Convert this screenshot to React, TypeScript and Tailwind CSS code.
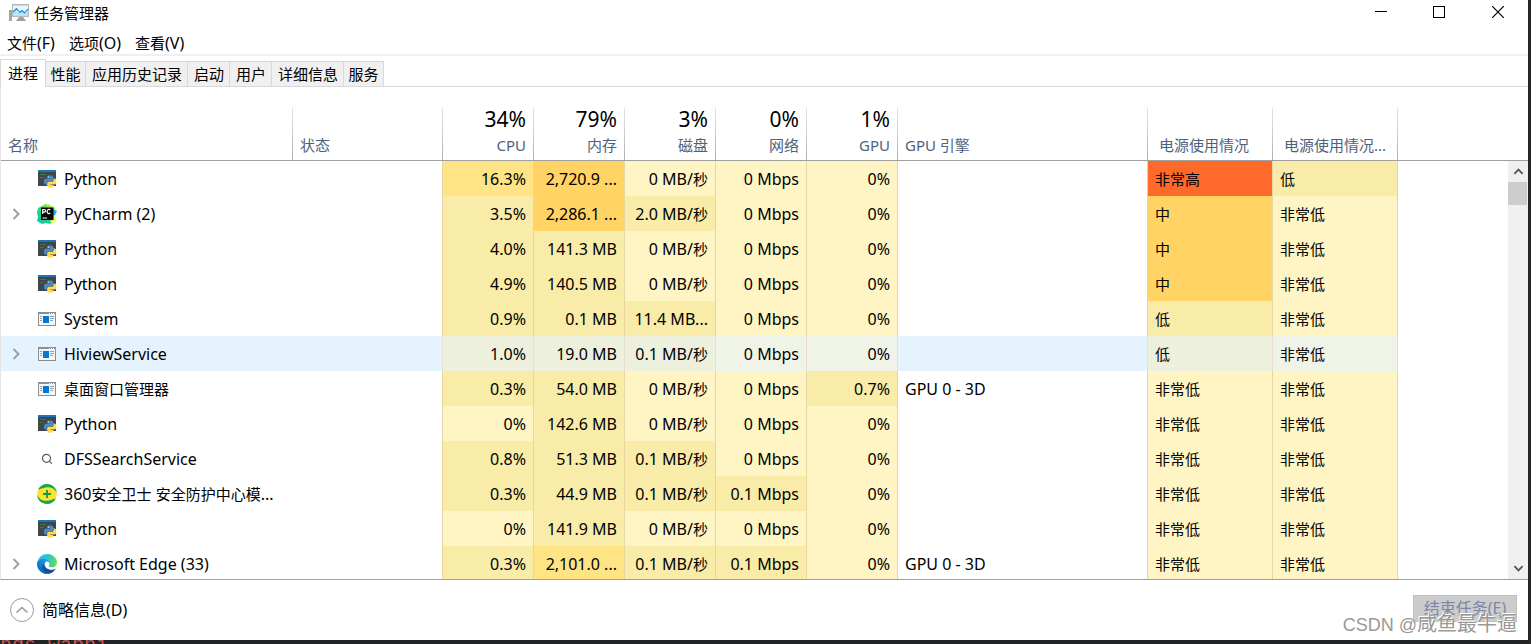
import { Fragment, useId, useState } from 'react';
import type { ReactNode } from 'react';

type IconName = 'python' | 'pycharm' | 'window' | 'search' | 'shield' | 'edge';

interface Process {
  icon: IconName;
  name: string;
  group?: boolean;
  metrics: string[];
  heat: number[];
  engine?: string;
  power: [string, string];
}

const METRICS = [
  { total: '34%', label: 'CPU' },
  { total: '79%', label: '内存' },
  { total: '3%', label: '磁盘' },
  { total: '0%', label: '网络' },
  { total: '1%', label: 'GPU' },
];

const PROCESSES: Process[] = [
  { icon: 'python', name: 'Python', metrics: ['16.3%', '2,720.9 ...', '0 MB/秒', '0 Mbps', '0%'], heat: [2, 3, 0, 0, 0, 4, 1], power: ['非常高', '低'] },
  { icon: 'pycharm', name: 'PyCharm (2)', group: true, metrics: ['3.5%', '2,286.1 ...', '2.0 MB/秒', '0 Mbps', '0%'], heat: [1, 3, 1, 0, 0, 3, 0], power: ['中', '非常低'] },
  { icon: 'python', name: 'Python', metrics: ['4.0%', '141.3 MB', '0 MB/秒', '0 Mbps', '0%'], heat: [1, 1, 0, 0, 0, 3, 0], power: ['中', '非常低'] },
  { icon: 'python', name: 'Python', metrics: ['4.9%', '140.5 MB', '0 MB/秒', '0 Mbps', '0%'], heat: [1, 1, 0, 0, 0, 3, 0], power: ['中', '非常低'] },
  { icon: 'window', name: 'System', metrics: ['0.9%', '0.1 MB', '11.4 MB...', '0 Mbps', '0%'], heat: [1, 1, 1, 0, 0, 1, 0], power: ['低', '非常低'] },
  { icon: 'window', name: 'HiviewService', group: true, metrics: ['1.0%', '19.0 MB', '0.1 MB/秒', '0 Mbps', '0%'], heat: [1, 1, 1, 0, 0, 1, 0], power: ['低', '非常低'] },
  { icon: 'window', name: '桌面窗口管理器', metrics: ['0.3%', '54.0 MB', '0 MB/秒', '0 Mbps', '0.7%'], heat: [1, 1, 0, 0, 1, 0, 0], engine: 'GPU 0 - 3D', power: ['非常低', '非常低'] },
  { icon: 'python', name: 'Python', metrics: ['0%', '142.6 MB', '0 MB/秒', '0 Mbps', '0%'], heat: [0, 1, 0, 0, 0, 0, 0], power: ['非常低', '非常低'] },
  { icon: 'search', name: 'DFSSearchService', metrics: ['0.8%', '51.3 MB', '0.1 MB/秒', '0 Mbps', '0%'], heat: [1, 1, 1, 0, 0, 0, 0], power: ['非常低', '非常低'] },
  { icon: 'shield', name: '360安全卫士 安全防护中心模...', metrics: ['0.3%', '44.9 MB', '0.1 MB/秒', '0.1 Mbps', '0%'], heat: [1, 1, 1, 1, 0, 0, 0], power: ['非常低', '非常低'] },
  { icon: 'python', name: 'Python', metrics: ['0%', '141.9 MB', '0 MB/秒', '0 Mbps', '0%'], heat: [0, 1, 0, 0, 0, 0, 0], power: ['非常低', '非常低'] },
  { icon: 'edge', name: 'Microsoft Edge (33)', group: true, metrics: ['0.3%', '2,101.0 ...', '0.1 MB/秒', '0.1 Mbps', '0%'], heat: [1, 2, 1, 1, 0, 0, 0], engine: 'GPU 0 - 3D', power: ['非常低', '非常低'] },
];

const HEAT = ['bg-[#fff4c4]', 'bg-[#f9eca8]', 'bg-[#ffe486]', 'bg-[#ffd364]', 'bg-[#ff692a]'];
const HEAT_SELECTED = ['bg-[#f0f3e8]', 'bg-[#edf0dc]', 'bg-[#f0ecc8]', 'bg-[#f0e4b8]', 'bg-[#f0a080]'];

const TABS = ['性能', '应用历史记录', '启动', '用户', '详细信息', '服务'];

/** Sets Chinese runs at their own size beside the Latin text around them. */
function Mixed({ children }: { children: string }) {
  return (
    <>
      {children.split(/([\u4e00-\u9fff]+)/).map((part, i) =>
        i % 2 === 1 ? (
          <span key={i} className="text-[15px]">{part}</span>
        ) : (
          <Fragment key={i}>{part}</Fragment>
        ),
      )}
    </>
  );
}

function PythonIcon() {
  return (
    <svg width="20" height="20" viewBox="0 0 20 20" aria-hidden="true">
      <path fill="#414648" d="M1 1h18v16H1z" />
      <path fill="#1b74bd" d="M1 1h18v2H1z" />
      <path stroke="#3d7a42" d="M3 5.500h6M3 8.500h4" />
      <g transform="translate(7 6.500) scale(.51)">
        <path fill="#4b8bc0" d="M14.250.18l.9.2.73.26.59.3.45.32.34.34.25.34.16.33.1.3.04.26.02.2-.01.13V8.500l-.05.63-.13.55-.21.46-.26.38-.3.31-.33.25-.35.19-.35.14-.33.1-.3.07-.26.04-.21.02H8.770l-.69.05-.59.14-.5.22-.41.27-.33.32-.27.35-.2.36-.15.37-.1.35-.07.32-.04.27-.02.21v3.060H3.170l-.21-.03-.28-.07-.32-.12-.35-.18-.36-.26-.36-.36-.35-.46-.32-.59-.28-.73-.21-.88-.14-1.050-.05-1.230.06-1.220.16-1.040.24-.87.32-.71.36-.57.4-.44.42-.33.42-.24.4-.16.36-.1.32-.05.24-.01h.16l.06.01h8.160v-.83H6.180l-.01-2.750-.02-.37.05-.34.11-.31.17-.28.25-.26.31-.23.38-.2.44-.18.51-.15.58-.12.64-.1.71-.06.77-.04.84-.02 1.270.05z" />
        <path fill="#ffdb55" d="M21.100 6.110l.28.06.32.12.35.18.36.27.36.35.35.47.32.59.28.73.21.88.14 1.040.05 1.230-.06 1.230-.16 1.040-.24.86-.32.71-.36.57-.4.45-.42.33-.42.24-.4.16-.36.09-.32.05-.24.02-.16-.01h-8.220v.82h5.840l.01 2.760.02.36-.05.34-.11.31-.17.29-.25.25-.31.24-.38.2-.44.17-.51.15-.58.13-.64.09-.71.07-.77.04-.84.01-1.270-.04-1.070-.14-.9-.2-.73-.25-.59-.3-.45-.33-.34-.34-.25-.34-.16-.33-.1-.3-.04-.25-.02-.2.01-.13v-5.340l.05-.64.13-.54.21-.46.26-.38.3-.32.33-.24.35-.2.35-.14.33-.1.3-.06.26-.04.21-.02.13-.01h5.840l.69-.05.59-.14.5-.21.41-.28.33-.32.27-.35.2-.36.15-.36.1-.35.07-.32.04-.28.02-.21V6.070h2.090l.14.01z" />
        <circle cx="8.700" cy="3" r="1.200" fill="#fff" />
      </g>
    </svg>
  );
}

function PyCharmIcon() {
  const id = useId();
  return (
    <svg width="20" height="20" viewBox="0 0 20 20" aria-hidden="true">
      <defs>
        <linearGradient id={id} x1="0" y1="1" x2="1" y2="0">
          <stop offset="0" stopColor="#12bfa5" />
          <stop offset=".45" stopColor="#21d789" />
          <stop offset=".75" stopColor="#8fea45" />
          <stop offset="1" stopColor="#fcf84a" />
        </linearGradient>
      </defs>
      <path fill={`url(#${id})`} d="M1 4l4-2 3-2 5 1 4 2 1 3-1 11-4 3-4-1-4 1-5-3 1-4-1-4z" />
      <path fill="#0fb6e8" d="M16 5l4 2-2 4h-2z" />
      <path fill="#fcf84a" d="M16 12l3 4-2 3-4-1z" />
      <path fill="#090909" d="M4 3.500h12.500V16H4z" />
      <path fill="none" stroke="#fff" strokeWidth="1.200" d="M5.700 10V5.500h1.500a1.200 1.200 0 010 2.700H5.700M13.300 5.800c-1.800-1-3.200 0-3.200 1.800s1.500 2.800 3.200 1.500" />
      <path fill="#fff" d="M5.500 13.500h4.500v1H5.500z" />
    </svg>
  );
}

function WindowIcon() {
  return (
    <svg width="20" height="20" viewBox="0 0 20 20" shapeRendering="crispEdges" aria-hidden="true">
      <path fill="#8a8f96" d="M1 3h18v14H1z" />
      <path fill="#f5f6f7" d="M2 5h16v11H2z" />
      <path fill="#fff" d="M12 4h1v1h-1zM14 4h1v1h-1zM16 4h1v1h-1z" />
      <path fill="#0078d7" d="M6 7h6v7H6z" />
      <path stroke="#9a9fa5" d="M3 7.500h2M3 9.500h2M3 11.500h2M13 7.500h4M13 9.500h4M13 11.500h3" />
    </svg>
  );
}

function SearchIcon() {
  return (
    <svg width="20" height="20" viewBox="0 0 20 20" fill="none" stroke="#5c5c5c" strokeWidth="1.200" aria-hidden="true">
      <circle cx="9.500" cy="9.300" r="4" />
      <path d="M12.300 12.200l2.500 2.500" />
    </svg>
  );
}

function ShieldIcon() {
  return (
    <svg width="20" height="20" viewBox="0 0 20 20" aria-hidden="true">
      <circle cx="10" cy="10" r="9.800" fill="#ffe22e" />
      <path fill="#12a84c" d="M1.200 5.600C3 2 6.300.1 10 .1c5.400 0 9.500 4 9.900 9C17.500 4.400 14 3.100 10.200 3.300 6.600 3.500 4 5.200 1.200 5.600z" />
      <path fill="#12a84c" d="M18.800 14.400C17 18 13.700 19.900 10 19.900c-5.400 0-9.500-4-9.900-9 2.400 4.700 5.900 6 9.700 5.800 3.600-.2 6.200-1.900 9-2.300z" />
      <path stroke="#0d9a48" strokeWidth="1.800" d="M10 6v8M6 10h8" />
    </svg>
  );
}

function EdgeIcon() {
  const id = useId();
  return (
    <svg width="20" height="20" viewBox="0 0 256 256" aria-hidden="true">
      <defs>
        <linearGradient id={`${id}a`} x1="0" y1=".5" x2="1" y2=".5">
          <stop offset="0" stopColor="#0c59a4" />
          <stop offset="1" stopColor="#114a8b" />
        </linearGradient>
        <linearGradient id={`${id}b`} x1=".8" y1=".2" x2=".3" y2="1">
          <stop offset="0" stopColor="#1b9de2" />
          <stop offset=".5" stopColor="#0f80d0" />
          <stop offset="1" stopColor="#0a5cae" />
        </linearGradient>
        <linearGradient id={`${id}c`} x1="0" y1=".4" x2="1" y2=".5">
          <stop offset="0" stopColor="#30b5f0" />
          <stop offset=".5" stopColor="#2bc3d2" />
          <stop offset="1" stopColor="#66e04d" />
        </linearGradient>
      </defs>
      <path fill={`url(#${id}a)`} d="M231 190.500c-3.400 1.800-6.900 3.400-10.500 4.700a101.700 101.700 0 01-35.900 6.500c-47.300 0-88.500-32.500-88.500-74.300a31.500 31.500 0 0116.400-27.300c-42.800 1.800-53.800 46.400-53.800 72.500 0 73.900 68.100 81.400 82.800 81.400 7.900 0 19.800-2.300 27-4.600l1.300-.4a128.300 128.300 0 0066.600-52.800 4 4 0 00-5.400-5.700z" />
      <path fill={`url(#${id}b)`} d="M105.700 241.400a79.200 79.200 0 01-22.700-21.300 80.700 80.700 0 0129.500-120c3.200-1.500 8.500-4.100 15.600-4a32.400 32.400 0 0125.700 13 31.900 31.900 0 016.300 18.700c0-.2 24.500-79.600-80-79.600-43.900 0-80 41.700-80 78.200a130.200 130.200 0 0012.100 56 128 128 0 00156.400 67.100 75.500 75.500 0 01-62.800-8z" />
      <path fill={`url(#${id}c)`} d="M152.300 148.900c-.9 1-3.400 2.500-3.400 5.600 0 2.600 1.700 5.200 4.800 7.300 14.300 10 41.400 8.600 41.500 8.600a59.600 59.600 0 0030.300-8.300A61.400 61.400 0 00256 109.300c.3-22.400-8-37.300-11.300-43.900C223.500 23.900 177.700 0 128 0A128 128 0 000 126.200c.5-36.500 36.800-66 80-66 3.500 0 23.500.3 42 10.100 16.300 8.600 24.900 18.900 30.800 29.200 6.200 10.700 7.300 24.100 7.300 29.500 0 5.300-2.700 13.300-7.800 19.900z" />
    </svg>
  );
}

const ICONS: Record<IconName, () => ReactNode> = {
  python: PythonIcon,
  pycharm: PyCharmIcon,
  window: WindowIcon,
  search: SearchIcon,
  shield: ShieldIcon,
  edge: EdgeIcon,
};

function AppIcon() {
  return (
    <svg width="20" height="18" viewBox="0 0 20 18" aria-hidden="true">
      <path fill="#a3a7aa" d="M0 6h3v11H0z" />
      <path fill="#49d13c" d="M1 6h1v2H1z" />
      <path fill="#b4b8bb" d="M3 0h17v13H3z" />
      <path fill="#e8f7fd" d="M4 1.500h15v10H4z" />
      <path fill="#b9e4f5" d="M4 8l3-3 3 4 3-3 3 3 3-4v6.500H4z" />
      <path fill="none" stroke="#1c86c8" strokeWidth="1.100" d="M4 8l3.500-3.500L11 8.500l2-2 2.500 2.500L19 5" />
      <path fill="#9b9fa2" d="M10 13h4l3 4H7z" />
    </svg>
  );
}

function Chevron({ className, d }: { className: string; d: string }) {
  return (
    <svg className={className} viewBox="0 0 12 12" fill="none" stroke="currentColor" strokeWidth="2" aria-hidden="true">
      <path d={d} />
    </svg>
  );
}

function HeaderCell({ children, className = '' }: { children?: ReactNode; className?: string }) {
  return (
    <th scope="col" className="border-b border-[#a0a0a0] p-0 pt-5 align-bottom font-normal">
      <div className={`flex h-[53px] flex-col justify-end border-r pb-1 text-[#4f627d] [border-image:linear-gradient(#e8e8e8,#b0b0b0)_1] ${className}`}>
        {children}
      </div>
    </th>
  );
}

export default function App() {
  const [selected, setSelected] = useState(5);

  return (
    <div className="flex h-screen flex-col overflow-hidden bg-[#222426] pr-[3px] text-base text-black [font-family:'Noto_Sans','Noto_Sans_CJK_SC',sans-serif]">
      <div className="flex min-h-0 flex-1 flex-col bg-white">
        <header className="flex h-[30px] shrink-0 items-start justify-between">
          <h1 className="flex h-[26px] items-center gap-[5px] pl-[9px] text-[15px]">
            <AppIcon />
            任务管理器
          </h1>
          <div className="flex">
            <button aria-label="最小化" className="flex h-6 w-[58px] items-center justify-center">
              <svg width="12" height="12" stroke="#000" shapeRendering="crispEdges"><path d="M0 5.500h12" /></svg>
            </button>
            <button aria-label="最大化" className="flex h-6 w-[58px] items-center justify-center">
              <svg width="12" height="12" stroke="#000" fill="none" shapeRendering="crispEdges"><path d="M.5.5h11v11H.5z" /></svg>
            </button>
            <button aria-label="关闭" className="flex h-6 w-[60px] items-center justify-center">
              <svg width="12" height="12" stroke="#000" strokeWidth="1.200"><path d="M0 0l12 12M12 0L0 12" /></svg>
            </button>
          </div>
        </header>

        <nav className="flex h-[26px] shrink-0 items-center gap-[14px] border-b-2 border-[#f0f0f0] pl-[7px] pt-0.5 leading-5">
          {['文件(F)', '选项(O)', '查看(V)'].map((item) => (
            <button key={item}><Mixed>{item}</Mixed></button>
          ))}
        </nav>

        <div role="tablist" className="flex h-[31px] shrink-0 items-end text-[15px]">
          <button role="tab" aria-selected="true" className="h-7 w-[46px] border border-b-0 border-[#d9d9d9] text-center leading-[25px]">
            进程
          </button>
          {TABS.map((tab, i) => (
            <button
              key={tab}
              role="tab"
              aria-selected="false"
              className={`h-[26px] border-y border-r border-[#d9d9d9] bg-[#f0f0f0] leading-6 ${i === 0 || i === TABS.length - 1 ? 'w-10' : 'pl-[6px] pr-[5px]'}`}
            >
              {tab}
            </button>
          ))}
          <div className="h-px flex-1 bg-[#d9d9d9]" />
        </div>

        <div className="flex min-h-0 flex-1 overflow-hidden border-b border-l border-b-[#a0a0a0] border-l-[#e5e5e5]">
          <div className="min-w-0 flex-1 overflow-hidden">
            <table className="w-full table-fixed border-separate border-spacing-0">
              <colgroup>
                <col className="w-[292px]" />
                <col className="w-[150px]" />
                {METRICS.map((m) => <col key={m.label} className="w-[91px]" />)}
                <col className="w-[250px]" />
                <col className="w-[125px]" />
                <col className="w-[125px]" />
                <col />
              </colgroup>
              <thead className="text-left text-[15px] leading-[22px]">
                <tr>
                  <HeaderCell className="pl-[7px]">名称</HeaderCell>
                  <HeaderCell className="pl-[7px]">状态</HeaderCell>
                  {METRICS.map((m) => (
                    <HeaderCell key={m.label} className="pr-[7px] text-right">
                      <span className="pb-px text-[21px] leading-7 text-black">{m.total}</span>
                      <span className="h-[22px]">{m.label}</span>
                    </HeaderCell>
                  ))}
                  <HeaderCell className="pl-[7px]"><span>GPU 引擎</span></HeaderCell>
                  <HeaderCell className="pl-[11px]">电源使用情况</HeaderCell>
                  <HeaderCell className="pl-[11px]">电源使用情况...</HeaderCell>
                  <td className="border-b border-[#a0a0a0]" />
                </tr>
              </thead>
              <tbody className="leading-6">
                {PROCESSES.map((p, row) => {
                  const Icon = ICONS[p.icon];
                  const active = row === selected;
                  const heat = active ? HEAT_SELECTED : HEAT;
                  const plain = active ? 'bg-[#e5f3ff]' : '';
                  const line = active ? 'border-[#eadfcb]' : 'border-[#e8d5a0]';
                  return (
                    <tr key={row} onClick={() => setSelected(row)} className="h-[35px] whitespace-nowrap">
                      <td className={`p-0 ${plain}`}>
                        <div className="flex h-[35px] items-center">
                          <div className="flex w-[36px] shrink-0 pl-[9px]">
                            {p.group && (
                              <button aria-label={`展开 ${p.name}`} className="text-[#a0a0a0]">
                                <Chevron className="size-3" d="M3.500 1l5 5-5 5" />
                              </button>
                            )}
                          </div>
                          <Icon />
                          <span className="pl-[7px]"><Mixed>{p.name}</Mixed></span>
                        </div>
                      </td>
                      <td className={`border-r p-0 ${plain} ${line}`} />
                      {p.metrics.map((value, i) => (
                        <td key={i} className={`border-r p-0 pr-[7px] text-right ${heat[p.heat[i]]} ${line}`}>
                          <Mixed>{value}</Mixed>
                        </td>
                      ))}
                      <td className={`border-r p-0 pl-[7px] ${plain} ${line}`}>{p.engine}</td>
                      {p.power.map((value, i) => (
                        <td key={i} className={`border-r p-0 pl-[7px] ${heat[p.heat[5 + i]]} ${line}`}>
                          <Mixed>{value}</Mixed>
                        </td>
                      ))}
                      <td />
                    </tr>
                  );
                })}
              </tbody>
            </table>
          </div>
          <div className="flex w-5 shrink-0 flex-col text-[#555]">
            <div className="h-[74px] shrink-0 border-b border-[#a0a0a0]" />
            <div className="flex flex-1 flex-col bg-[#f0f0f0]">
              <button aria-label="向上滚动" className="flex h-[21px] items-center justify-center">
                <Chevron className="size-[11px]" d="M1.500 8.500L6 4l4.500 4.500" />
              </button>
              <div className="mr-px h-[23px] bg-[#cdcdcd]" />
              <button aria-label="向下滚动" className="mt-auto flex h-[21px] items-center justify-center">
                <Chevron className="size-[11px]" d="M1.500 3.500L6 8l4.500-4.500" />
              </button>
            </div>
          </div>
        </div>

        <footer className="relative flex h-[60px] shrink-0 items-center justify-between pl-[10px] pr-[11px]">
          <button className="flex items-center gap-2">
            <svg width="24" height="24" fill="none" stroke="#999" aria-hidden="true">
              <circle cx="12" cy="12" r="11.500" />
              <path strokeWidth="1.600" d="M6.500 14.500L12 9.500l5.500 5" />
            </svg>
            简略信息(D)
          </button>
          <button disabled className="mb-1 h-[27px] w-[104px] border border-[#bfbfbf] bg-[#cccccc] leading-6 text-[#7f86a8]">
            结束任务(E)
          </button>
          <span className="pointer-events-none absolute bottom-0 right-[11px] whitespace-nowrap text-[18px] leading-[30px] text-[#999] [font-family:'Liberation_Sans','Noto_Sans_CJK_SC',sans-serif] [text-shadow:-1px_-1px_0_#fff]">
            CSDN @<span className="text-[20px]">咸鱼最牛逼</span>
          </span>
        </footer>
      </div>
      <div aria-hidden="true" className="h-1 shrink-0 overflow-hidden whitespace-pre text-[20px] leading-3 text-[#c75450] [font-family:'Liberation_Mono',monospace]">
        ngs wappi
      </div>
    </div>
  );
}
